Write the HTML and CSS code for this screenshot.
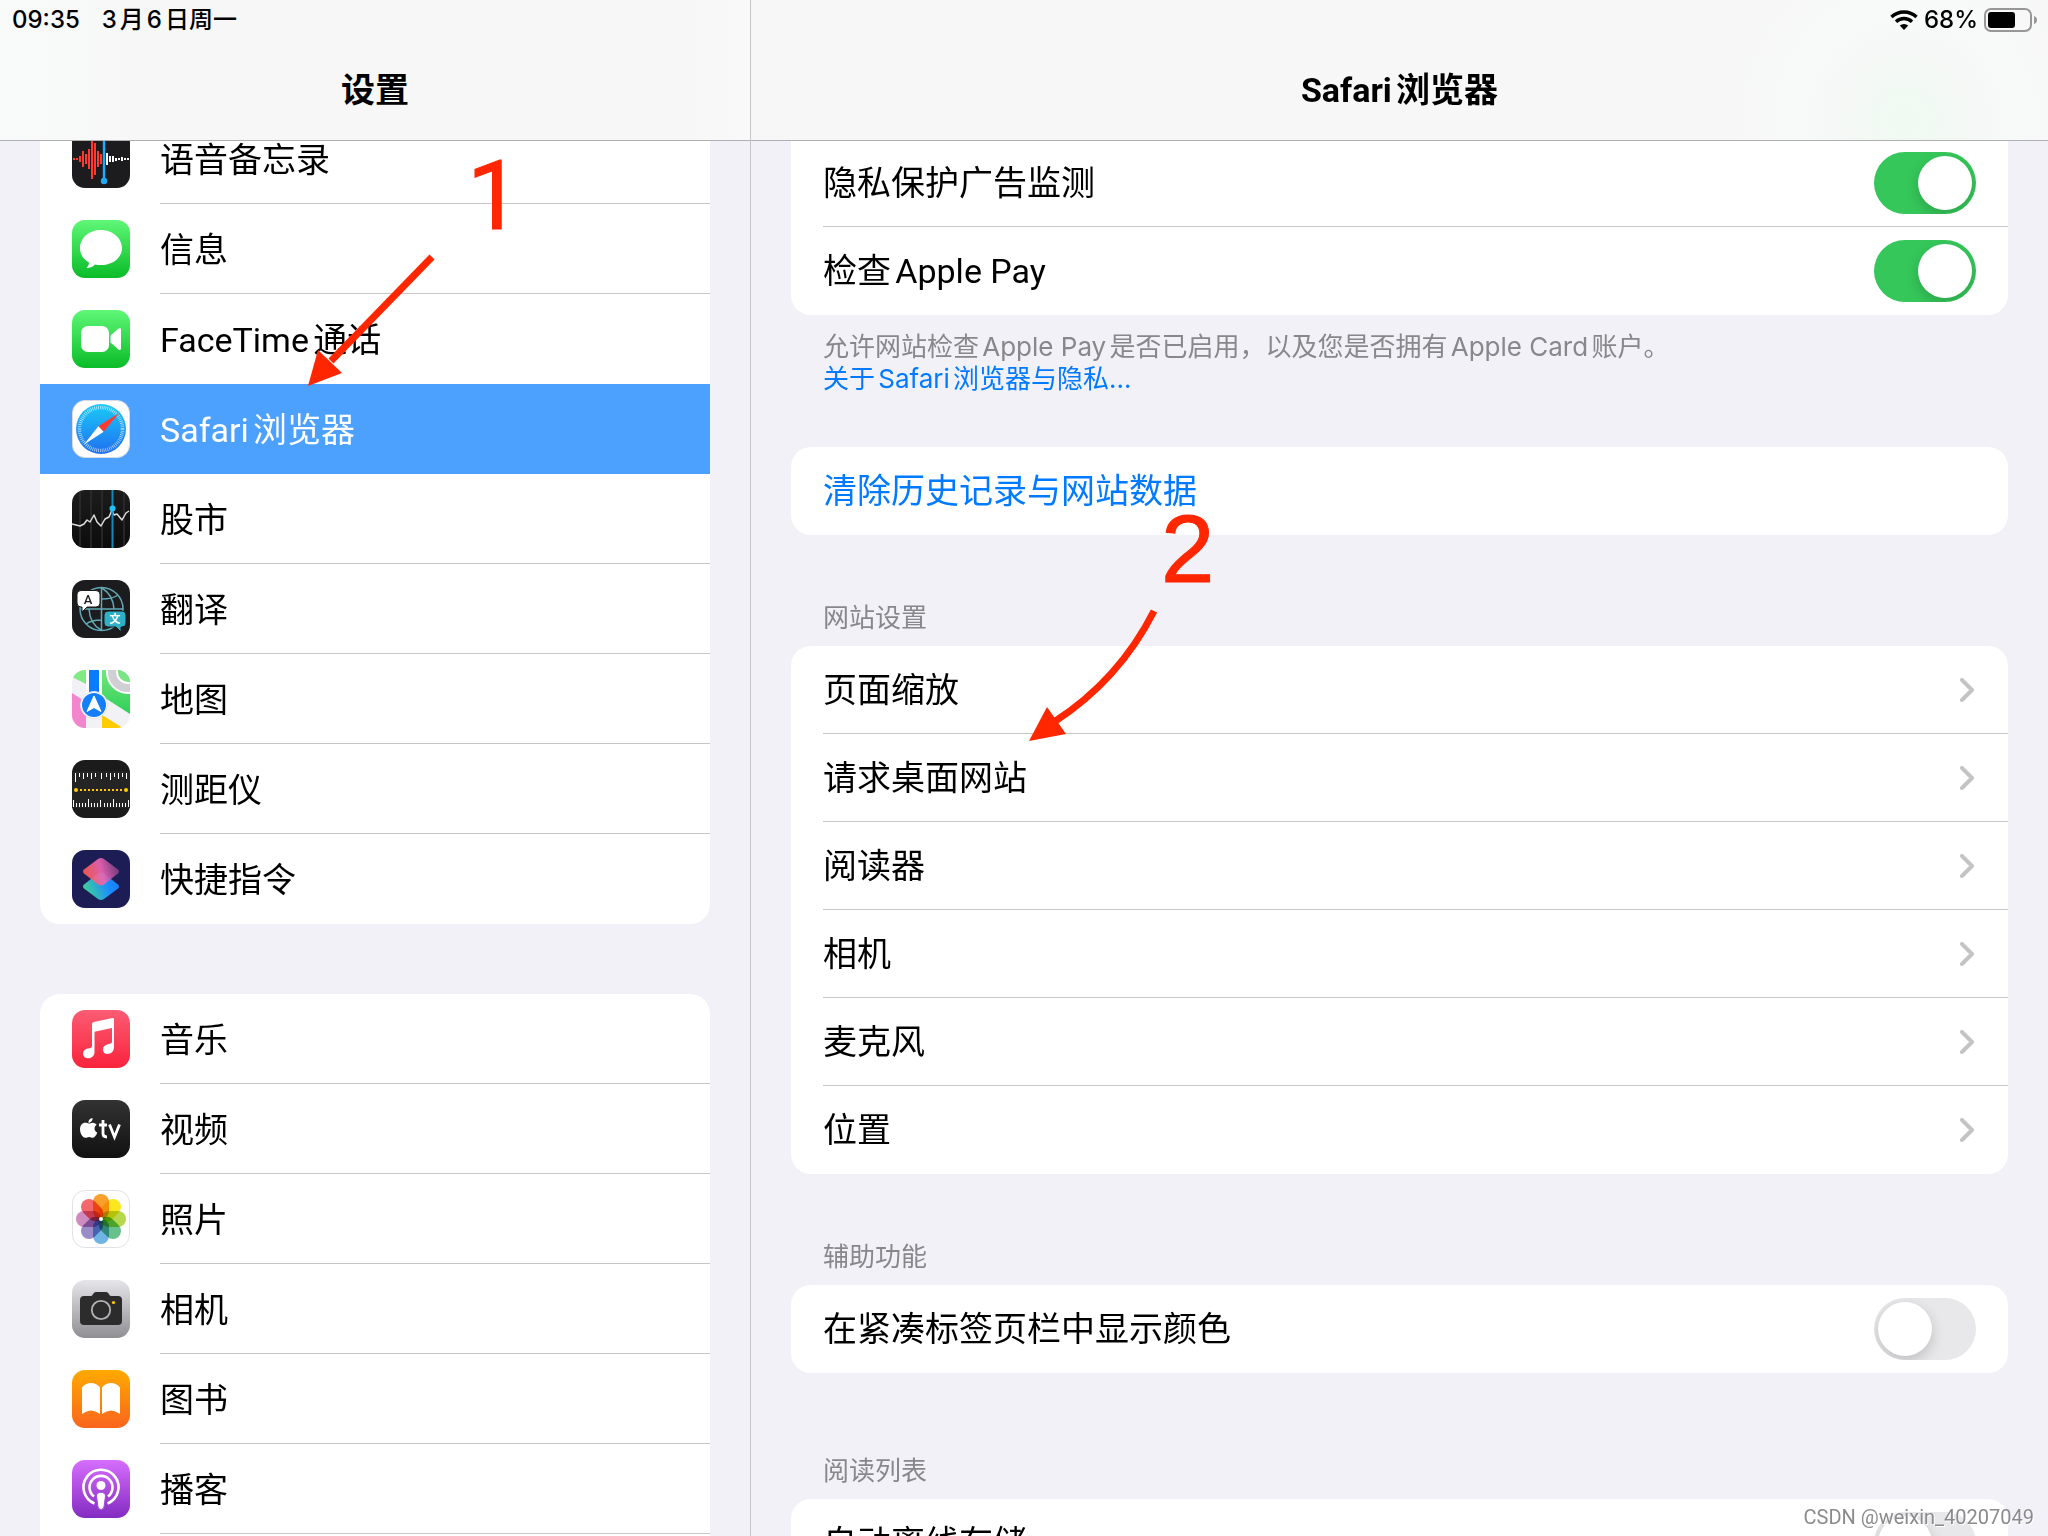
FILE: index.html
```html
<!DOCTYPE html>
<html lang="zh-CN">
<head>
<meta charset="utf-8">
<meta name="viewport" content="width=device-width, initial-scale=1">
<title>设置</title>
<link rel="stylesheet" href="styles.css">
</head>
<body>
<div class="screen">
  <aside class="pane sidebar">
    <header class="bar">
      <div class="status"><span>09:35</span><span>3月6日周一</span></div>
      <h1 class="title">设置</h1>
    </header>
    <nav class="content content-sidebar" aria-label="设置">
      <div class="card">
        <a class="app" href="#voice-memos">
          <svg class="icon" viewBox="0 0 58 58" aria-hidden="true"><rect width="58" height="58" rx="13" fill="#1c1c1e"/><path d="M2 28v2M5 28v2M8 26v6M11 21v16M14 24v10M17 19v20M20 9v40M23 13v32M26 21v16M29 24v10" stroke="#fe3b30" stroke-width="2"/><path d="M35 23v12M38 26v6M41 26v6M44 28v3M47 28v2M50 27v4M53 28v2M56 28v2" stroke="#fff" stroke-width="2"/><path d="M32 4v48" stroke="#1badf8" stroke-width="2.4"/><circle cx="32" cy="51" r="3.2" fill="#1badf8"/></svg>
          <span class="app-name">语音备忘录</span>
        </a>
        <a class="app" href="#messages">
          <svg class="icon" viewBox="0 0 58 58" aria-hidden="true"><defs><linearGradient id="green" x2="0" y2="1"><stop stop-color="#5ff777"/><stop offset="1" stop-color="#0abc28"/></linearGradient></defs><rect width="58" height="58" rx="13" fill="url(#green)"/><path d="M29 10C17 10 8 18 8 28c0 6 3 11 9 14.500 0 2-1 4-2.500 5.500 4 0 6.500-1.500 8.500-3.500 2 .4 4 .6 6 .6 12 0 21-7.500 21-17.100S41 10 29 10z" fill="#fff"/></svg>
          <span class="app-name">信息</span>
        </a>
        <a class="app before-selected" href="#facetime">
          <svg class="icon" viewBox="0 0 58 58" aria-hidden="true"><rect width="58" height="58" rx="13" fill="url(#green)"/><rect x="9" y="16" width="28" height="26" rx="7" fill="#fff"/><path d="M38.500 25.500l8-7q2.500-1.500 2.500 1.500v18q0 3-2.500 1.500l-8-7z" fill="#fff"/></svg>
          <span class="app-name">FaceTime通话</span>
        </a>
        <a class="app selected" href="#safari" aria-current="page">
          <svg class="icon" viewBox="0 0 58 58" aria-hidden="true"><defs><linearGradient id="compass" x2="0" y2="1"><stop stop-color="#1bcaf8"/><stop offset="1" stop-color="#1f6ff0"/></linearGradient></defs><rect x=".5" y=".5" width="57" height="57" rx="12.500" fill="#fff" stroke="#d9dbe3"/><circle cx="29" cy="29" r="25" fill="url(#compass)"/><circle cx="29" cy="29" r="21.500" fill="none" stroke="#fff" stroke-opacity=".75" stroke-width="3.500" stroke-dasharray=".7 1.180"/><path d="M47 13L26.300 26.300l5.400 5.400z" fill="#ff3b30"/><path d="M12 44.500l14.300-18.200 5.400 5.400z" fill="#fff"/></svg>
          <span class="app-name">Safari浏览器</span>
        </a>
        <a class="app" href="#stocks">
          <svg class="icon" viewBox="0 0 58 58" aria-hidden="true"><defs><linearGradient id="ink" x2="0" y2="1"><stop stop-color="#1c1c1d"/><stop offset="1" stop-color="#0c0c0d"/></linearGradient></defs><rect width="58" height="58" rx="13" fill="url(#ink)"/><path d="M8 2v54M19 0v58M30 0v58M52 2v54" stroke="#2e2e30" stroke-width="1.500"/><path d="M0 34l4 1 4 1 4-2 3-4 3 2 4-7 3 7 4 4 4-7 4-2 3-7 2 5 3-1 5 6 4-7 3-2" fill="none" stroke="#ddd" stroke-width="1.500" stroke-linejoin="round"/><path d="M40.500 0v58" stroke="#1888b0" stroke-width="2"/><circle cx="40.500" cy="18.500" r="3" fill="#22c4f8"/></svg>
          <span class="app-name">股市</span>
        </a>
        <a class="app" href="#translate">
          <svg class="icon" viewBox="0 0 58 58" aria-hidden="true"><rect width="58" height="58" rx="13" fill="#1c1c1e"/><g fill="none" stroke="#62a9b5" stroke-width="1.500"><circle cx="29.500" cy="29" r="21.500"/><path d="M8 29h43M29.500 7.500v43M30 8c8 5 11.500 12 12 21M29 50c-7-4-11.500-11-12-21M30 19c7 0 12-1 16-4M29 40c-6 0-11 1-15 4"/></g><path d="M9 10.500h15a4 4 0 0 1 4 4V23a4 4 0 0 1-4 4h-9l-5 5v-5H9a4 4 0 0 1-4-4v-8.500a4 4 0 0 1 4-4z" fill="#fff" stroke="#1c1c1e"/><path d="M36 31h14a4 4 0 0 1 4 4v8a4 4 0 0 1-4 4h-1v5l-5-5h-8a4 4 0 0 1-4-4v-8a4 4 0 0 1 4-4z" fill="#30b0c7" stroke="#1c1c1e"/><text x="16" y="23.500" class="glyph-a">A</text><text x="43" y="43" class="glyph-wen">文</text></svg>
          <span class="app-name">翻译</span>
        </a>
        <a class="app" href="#maps">
          <svg class="icon" viewBox="0 0 58 58" aria-hidden="true"><defs><clipPath id="tile"><rect width="58" height="58" rx="13"/></clipPath><linearGradient id="park" x2="0" y2="1"><stop stop-color="#72e67c"/><stop offset="1" stop-color="#2fcf58"/></linearGradient></defs><g clip-path="url(#tile)"><path fill="#f2f1f6" d="M0 0h58v58H0z"/><path d="M0 7V0h14v14z" fill="#80ea83"/><path d="M30 0h28v44L30 26z" fill="url(#park)"/><circle cx="56" cy="2" r="16" fill="#7be484" stroke="#fff" stroke-width="12"/><circle cx="56" cy="2" r="16" fill="none" stroke="#cfcfd4" stroke-width="8"/><path d="M0 23l14 9v26H0z" fill="#f285ce"/><path d="M30 45l21 13H30z" fill="#ffcc02"/><path fill="#fff" d="M14 0h16v24H14z"/><path fill="#0a7cff" d="M17 0h10v24H17z"/></g><circle cx="22" cy="35" r="13.500" fill="#fff" stroke="#e3e3ea"/><circle cx="22" cy="35" r="12" fill="#147efb"/><path d="M22 26l7 15.500-7-4-7 4z" fill="#fff" stroke="#fff" stroke-width="1" stroke-linejoin="round"/></svg>
          <span class="app-name">地图</span>
        </a>
        <a class="app" href="#measure">
          <svg class="icon" viewBox="0 0 58 58" aria-hidden="true"><rect width="58" height="58" rx="13" fill="#1b1b1b"/><path d="M0 11h58v37H0z" fill="#242424"/><path d="M3.500 13v9M7.500 13v4M11.500 13v6M15.500 13v4M19.500 13v6M23.500 13v4M29.500 13v6M34.500 13v4M38.500 13v7M42.500 13v4M46.500 13v6M50.500 13v4M54.500 13v6M1.500 47v-7M4.500 47v-4M7.500 47v-4M10.500 47v-4M13.500 47v-4M16.500 47v-8M19.500 47v-4M22.500 47v-4M25.500 47v-4M28.500 47v-7M32.500 47v-4M35.500 47v-4M38.500 47v-4M41.500 47v-8M44.500 47v-4M47.500 47v-4M50.500 47v-4M53.500 47v-4M56.500 47v-7" stroke="#fff"/><path d="M8 30h42" stroke="#ffcc00" stroke-width="2" stroke-dasharray="2 2"/><circle cx="4" cy="30" r="2" fill="#ffcc00"/><circle cx="54" cy="30" r="2" fill="#ffcc00"/></svg>
          <span class="app-name">测距仪</span>
        </a>
        <a class="app" href="#shortcuts">
          <svg class="icon" viewBox="0 0 58 58" aria-hidden="true"><defs><linearGradient id="lower" x1="0" y1=".7" x2="1" y2=".4"><stop stop-color="#43d690"/><stop offset=".7" stop-color="#1a8cff"/><stop offset="1" stop-color="#1a7df5"/></linearGradient><linearGradient id="upper" x1=".1" y1=".7" x2="1" y2=".5"><stop stop-color="#ff5f57"/><stop offset=".5" stop-color="#f065b4"/><stop offset="1" stop-color="#7d3d80"/></linearGradient></defs><rect width="58" height="58" rx="13" fill="#1d1d56"/><path d="M12 34.500l14-11q3-2 6 0l14 11q2 2 0 4l-14 10.500q-3 2-6 0l-14-10.500q-2-2 0-4z" fill="url(#lower)"/><path d="M12 19.500l14-10.500q3-2 6 0l14 10.500q2 2 0 4l-14 11q-3 2-6 0l-14-11q-2-2 0-4z" fill="url(#upper)" fill-opacity=".9"/></svg>
          <span class="app-name">快捷指令</span>
        </a>
      </div>
      <div class="card">
        <a class="app" href="#music">
          <svg class="icon" viewBox="0 0 58 58" aria-hidden="true"><defs><linearGradient id="music" x2="0" y2="1"><stop stop-color="#fb5c74"/><stop offset="1" stop-color="#fa233b"/></linearGradient></defs><rect width="58" height="58" rx="13" fill="url(#music)"/><path d="M20 14q0-1.700 1.700-2l18.800-4q1.500-.2 1.500 1.300V37c0 4-2.500 7-6.500 7-3 0-4.500-2-4.500-4.500 0-3 2-4.700 5-5.300 2.500-.5 4-.7 4-2.700V18l-17.500 3.700v20c0 4-2.500 6.500-6.500 6.500-3 0-5-2-5-4.500 0-3 2-4.700 5-5.200 2.500-.5 4-.7 4-3z" fill="#fff"/></svg>
          <span class="app-name">音乐</span>
        </a>
        <a class="app" href="#tv">
          <svg class="icon" viewBox="0 0 58 58" aria-hidden="true"><defs><linearGradient id="tv" x2="0" y2="1"><stop stop-color="#323232"/><stop offset="1" stop-color="#111"/></linearGradient></defs><rect width="58" height="58" rx="13" fill="url(#tv)"/><path d="M20.500 18c.3 2.500-1.500 4.600-4 4.800-.3-2.400 1.700-4.500 4-4.800zM16.700 23.500c1.300 0 2.300-.8 4-.8 1.500 0 3 .7 4 2-3.200 2-2.700 6.500.6 7.800-.7 2-2.500 5.200-4.400 5.200-1.500 0-2-.8-3.800-.8s-2.300.8-3.800.8C10.500 37.700 8 33 8 29.500c0-4 2.300-6.700 5.200-6.700 1.500 0 2.600.7 3.500.7z" fill="#fff"/><path d="M31 20v13.500q0 3.500 4 3.500M27 25h8M37.500 24.500l5 12.500 5-12.500" fill="none" stroke="#fff" stroke-width="2.800"/></svg>
          <span class="app-name">视频</span>
        </a>
        <a class="app" href="#photos">
          <svg class="icon" viewBox="0 0 58 58" aria-hidden="true"><rect x=".5" y=".5" width="57" height="57" rx="12.500" fill="#fff" stroke="#e2e2e4"/><g class="petals"><rect x="21" y="4" width="16" height="25" rx="8" fill="#f9a02c"/><rect x="21" y="4" width="16" height="25" rx="8" fill="#fbe61f" transform="rotate(45 29 29)"/><rect x="21" y="4" width="16" height="25" rx="8" fill="#b7d84b" transform="rotate(90 29 29)"/><rect x="21" y="4" width="16" height="25" rx="8" fill="#68c18a" transform="rotate(135 29 29)"/><rect x="21" y="4" width="16" height="25" rx="8" fill="#70b4e4" transform="rotate(180 29 29)"/><rect x="21" y="4" width="16" height="25" rx="8" fill="#9a8cc8" transform="rotate(225 29 29)"/><rect x="21" y="4" width="16" height="25" rx="8" fill="#cf8cc0" transform="rotate(270 29 29)"/><rect x="21" y="4" width="16" height="25" rx="8" fill="#f2686c" transform="rotate(315 29 29)"/></g><circle cx="29" cy="29" r="2" fill="#fff"/></svg>
          <span class="app-name">照片</span>
        </a>
        <a class="app" href="#camera">
          <svg class="icon" viewBox="0 0 58 58" aria-hidden="true"><defs><linearGradient id="silver" x2="0" y2="1"><stop stop-color="#e5e5ea"/><stop offset="1" stop-color="#8e8e93"/></linearGradient></defs><rect width="58" height="58" rx="13" fill="url(#silver)"/><path d="M12 16h7c2 0 2-4 5-4h10c3 0 3 4 5 4h7a4 4 0 0 1 4 4v21a4 4 0 0 1-4 4H12a4 4 0 0 1-4-4V20a4 4 0 0 1 4-4z" fill="#2c2c2c"/><circle cx="29" cy="30" r="9.200" fill="#2c2c2c" stroke="#b2b2b7" stroke-width="1.800"/><circle cx="41.500" cy="22.500" r="1.600" fill="#ffcc00"/></svg>
          <span class="app-name">相机</span>
        </a>
        <a class="app" href="#books">
          <svg class="icon" viewBox="0 0 58 58" aria-hidden="true"><defs><linearGradient id="books" x2="0" y2="1"><stop stop-color="#ffaa00"/><stop offset="1" stop-color="#fa641e"/></linearGradient></defs><rect width="58" height="58" rx="13" fill="url(#books)"/><path d="M28 17.500c-4-6-14-6-18 0V44q9-7 18 0zM30 17.500c4-6 14-6 18 0V44q-9-7-18 0z" fill="#fff"/></svg>
          <span class="app-name">图书</span>
        </a>
        <a class="app" href="#podcasts">
          <svg class="icon" viewBox="0 0 58 58" aria-hidden="true"><defs><linearGradient id="podcasts" x2="0" y2="1"><stop stop-color="#d66efd"/><stop offset="1" stop-color="#832bc1"/></linearGradient></defs><rect width="58" height="58" rx="13" fill="url(#podcasts)"/><g fill="none" stroke="#fff" stroke-width="2.600"><path d="M22.500 43.500a17.500 17.500 0 1 1 13 0"/><path d="M22 36.500a11.500 11.500 0 1 1 14 0"/></g><circle cx="29" cy="25.500" r="4.500" fill="#fff"/><path d="M24.500 36c0-5 9-5 9 0l-1.500 11q-.5 2.500-3 2.500t-3-2.500z" fill="#fff" stroke="#a24cdb"/></svg>
          <span class="app-name">播客</span>
        </a>
        <div class="app"></div>
      </div>
    </nav>
  </aside>

  <main class="pane detail">
    <header class="bar bar-detail">
      <div class="status status-end">
        <svg class="wifi" viewBox="0 0 28 20" aria-hidden="true"><g fill="none" stroke="#000" stroke-width="3.400"><path d="M1.500 7a18 18 0 0 1 25 0"/><path d="M6 11.800a11.500 11.500 0 0 1 16 0"/></g><path d="M14 20l-4.200-4.400a6 6 0 0 1 8.400 0z"/></svg>
        <span>68%</span>
        <svg class="battery" viewBox="0 0 54 24" aria-hidden="true"><rect x="1" y="1" width="46" height="22" rx="6" fill="none" stroke="#979798" stroke-width="2"/><rect x="4" y="4" width="27" height="16" rx="3"/><path d="M50 8q3 1 3 4t-3 4z" fill="#979798"/></svg>
      </div>
      <h2 class="title">Safari浏览器</h2>
    </header>
    <div class="content content-detail">
      <section class="group">
        <div class="card card-continued">
          <label class="row"><span class="row-body">隐私保护广告监测<input class="switch" type="checkbox" checked></span></label>
          <label class="row"><span class="row-body">检查Apple Pay<input class="switch" type="checkbox" checked></span></label>
        </div>
        <p class="note">允许网站检查Apple Pay是否已启用，以及您是否拥有Apple Card账户。<br><a href="#privacy">关于Safari浏览器与隐私…</a></p>
      </section>
      <section class="group group-action">
        <div class="card">
          <button class="row action" type="button"><span class="row-body">清除历史记录与网站数据</span></button>
        </div>
      </section>
      <section class="group">
        <h3 class="caption">网站设置</h3>
        <div class="card">
          <a class="row" href="#zoom"><span class="row-body">页面缩放<svg class="chevron" viewBox="0 0 16 24" aria-hidden="true"><path d="M2 2l10 10L2 22"/></svg></span></a>
          <a class="row" href="#desktop"><span class="row-body">请求桌面网站<svg class="chevron" viewBox="0 0 16 24" aria-hidden="true"><path d="M2 2l10 10L2 22"/></svg></span></a>
          <a class="row" href="#reader"><span class="row-body">阅读器<svg class="chevron" viewBox="0 0 16 24" aria-hidden="true"><path d="M2 2l10 10L2 22"/></svg></span></a>
          <a class="row" href="#camera-access"><span class="row-body">相机<svg class="chevron" viewBox="0 0 16 24" aria-hidden="true"><path d="M2 2l10 10L2 22"/></svg></span></a>
          <a class="row" href="#microphone"><span class="row-body">麦克风<svg class="chevron" viewBox="0 0 16 24" aria-hidden="true"><path d="M2 2l10 10L2 22"/></svg></span></a>
          <a class="row" href="#location"><span class="row-body">位置<svg class="chevron" viewBox="0 0 16 24" aria-hidden="true"><path d="M2 2l10 10L2 22"/></svg></span></a>
        </div>
      </section>
      <section class="group">
        <h3 class="caption">辅助功能</h3>
        <div class="card">
          <label class="row"><span class="row-body">在紧凑标签页栏中显示颜色<input class="switch" type="checkbox"></span></label>
        </div>
      </section>
      <section class="group group-spaced">
        <h3 class="caption">阅读列表</h3>
        <div class="card">
          <label class="row"><span class="row-body">自动离线存储<input class="switch" type="checkbox"></span></label>
        </div>
      </section>
    </div>
  </main>

  <div class="mark mark-one">1</div>
  <svg class="arrow arrow-one" viewBox="0 0 130 136" aria-hidden="true"><path d="M125 7L24 111" fill="none" stroke="#ff2600" stroke-width="7"/><path d="M1 136l10-36 24 23z" fill="#ff2600"/></svg>
  <div class="mark mark-two">2</div>
  <svg class="arrow arrow-two" viewBox="0 0 130 136" aria-hidden="true"><path d="M126 7Q91 76 26 118" fill="none" stroke="#ff2600" stroke-width="7"/><path d="M1 137l18-34 19 27z" fill="#ff2600"/></svg>
  <div class="watermark">CSDN @weixin_40207049</div>
</div>
</body>
</html>
```

FILE: styles.css
```css
* { box-sizing: border-box; }

body {
  margin: 0;
  background: #f2f1f7;
  color: #000;
  font: 34px/48px Roboto, "Noto Sans CJK SC", sans-serif;
  text-autospace: normal;
}

a { color: inherit; text-decoration: none; }

.screen {
  position: relative;
  display: grid;
  grid-template-columns: 751fr 1297fr;
  height: 100vh;
  overflow: hidden;
}

.pane {
  display: flex;
  flex-direction: column;
  min-width: 0;
  min-height: 0;
}

.sidebar { border-right: 1px solid #c6c6c8; }

.bar {
  z-index: 1;
  flex: none;
  height: 141px;
  border-bottom: 1px solid #b0b0b2;
  background: linear-gradient(90deg, #f9fafa, #f7f7f7 20%, #f7f7f7 90%, #f9f9f9);
}

.bar-detail {
  background: radial-gradient(circle at 89% 85%, #effaf1, #f4f8f5 5%, #f8f9f9 9%, #f7f7f7 16%);
}

.status {
  display: flex;
  align-items: center;
  gap: 22px;
  height: 40px;
  padding: 0 12px;
  font-family: Inter, "Noto Sans CJK SC", sans-serif;
  font-size: 24px;
  line-height: 40px;
  font-weight: 500;
}

.status-end {
  justify-content: flex-end;
  gap: 6px;
  padding-right: 10px;
}

.wifi { width: 28px; height: 20px; }
.battery { width: 54px; height: 24px; }

.title {
  margin: 0;
  padding-top: 26px;
  font-size: 34px;
  line-height: 48px;
  font-weight: 700;
  text-align: center;
}

.content {
  flex: 1;
  min-height: 0;
  overflow: hidden;
  padding: 0 40px;
}

.card {
  flex: none;
  overflow: hidden;
  border-radius: 20px;
  background: #fff;
}

.card-continued { border-radius: 0 0 20px 20px; }

/* The lists are scrolled partly under their bars. */
.content-sidebar > .card:first-child { margin-top: -27px; }
.content-detail > .group:first-child { margin-top: -2px; }
.content-sidebar > .card + .card { margin-top: 70px; }

.app {
  display: flex;
  align-items: center;
  gap: 30px;
  height: 90px;
  padding-left: 32px;
}

.icon { flex: none; width: 58px; height: 58px; }

.app-name {
  flex: 1;
  height: 90px;
  border-bottom: 1px solid #c6c6c8;
  line-height: 92px;
}

.app:last-child .app-name,
.before-selected .app-name,
.selected .app-name { border-bottom-color: transparent; }

.selected { background: #4ca1ff; color: #fff; }

.glyph-a {
  fill: #1c1c1e;
  font: 500 13px Roboto, sans-serif;
  text-anchor: middle;
}

.glyph-wen {
  fill: #fff;
  font: 700 11px "Noto Sans CJK SC", sans-serif;
  text-anchor: middle;
}

.petals { isolation: isolate; }
.petals rect { mix-blend-mode: multiply; }

.row {
  display: block;
  width: 100%;
  padding: 0 0 0 32px;
}

.row-body {
  display: flex;
  align-items: center;
  justify-content: space-between;
  height: 88px;
  padding-right: 32px;
  border-bottom: 1px solid #c6c6c8;
}

.row:last-child .row-body { border-bottom-color: transparent; }

.action {
  border: 0;
  background: none;
  color: #007aff;
  font: inherit;
  text-align: left;
}

.note {
  margin: 16px 32px 0;
  color: #87878c;
  font-family: Inter, "Noto Sans CJK SC", sans-serif;
  font-size: 26px;
  line-height: 32px;
}

.note a { color: #007aff; }

.group-action { margin-top: 52px; }

.caption {
  margin: 0;
  padding: 63px 32px 8px;
  color: #87878c;
  font-size: 26px;
  line-height: 40px;
  font-weight: 400;
}

.group-spaced { margin-top: 15px; }

.switch {
  flex: none;
  width: 102px;
  height: 62px;
  margin: 0;
  padding: 4px;
  overflow: hidden;
  border-radius: 31px;
  background: #e8e8ea;
  appearance: none;
}

.switch::before {
  content: "";
  display: block;
  width: 54px;
  height: 54px;
  border-radius: 50%;
  background: #fff;
  box-shadow: 0 5px 14px rgba(0, 0, 0, .18);
}

.switch:checked { background: #35c75a; }
.switch:checked::before { margin-left: 40px; }

.chevron {
  width: 16px;
  height: 24px;
  fill: none;
  stroke: #c4c4c7;
  stroke-width: 4;
  stroke-linecap: round;
  stroke-linejoin: round;
}

/* Annotations drawn over the screen. */
.mark, .arrow, .watermark { position: absolute; z-index: 2; }

.mark {
  color: #ff2600;
  font-size: 96px;
  line-height: 96px;
  -webkit-text-stroke: 1px #ff2600;
}

.mark-one { left: 467px; top: 148px; }
.mark-two { left: 1161px; top: 501px; font-family: "Liberation Sans", sans-serif; }
.arrow { width: 130px; height: 136px; overflow: visible; }
.arrow-one { left: 307px; top: 250px; }
.arrow-two { left: 1028px; top: 604px; }

.watermark {
  right: 14px;
  bottom: 7px;
  color: #8b8b8d;
  font-size: 20px;
  line-height: 24px;
  text-shadow: 1px 1px 0 #fff;
}
```
